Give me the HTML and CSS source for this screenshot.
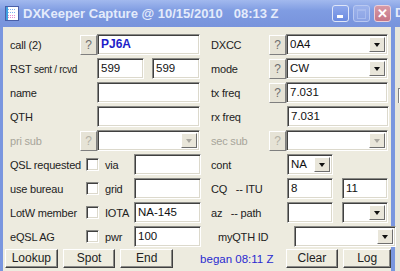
FILE: index.html
```html
<!DOCTYPE html>
<html lang="en">
<head>
  <meta charset="UTF-8" />
  <title>DXKeeper Capture</title>
  <link rel="stylesheet" href="styles.css">
</head>
<body>
  <div class="screen">
    <div class="window">
      <div class="titlebar">
        <svg class="app-icon" width="14" height="15" viewBox="0 0 14 15">
          <rect x="0.5" y="0.5" width="13" height="14" fill="#fff" stroke="#4a5fa8"/>
          <g fill="#7fb0f0">
            <rect x="3" y="3" width="1" height="1"/><rect x="5" y="3" width="1" height="1"/><rect x="7" y="3" width="1" height="1"/><rect x="9" y="3" width="1" height="1"/>
            <rect x="3" y="6" width="1" height="1"/><rect x="5" y="6" width="1" height="1"/><rect x="7" y="6" width="1" height="1"/><rect x="9" y="6" width="1" height="1"/>
          </g>
          <g fill="#e88ad0">
            <rect x="3" y="9" width="1" height="1"/><rect x="5" y="9" width="1" height="1"/><rect x="7" y="9" width="1" height="1"/><rect x="9" y="9" width="1" height="1"/>
            <rect x="3" y="11" width="1" height="1"/><rect x="5" y="11" width="1" height="1"/><rect x="7" y="11" width="1" height="1"/><rect x="9" y="11" width="1" height="1"/>
          </g>
          <rect x="1" y="1" width="2" height="13" fill="#3fa0e0"/>
        </svg>
        <span class="title">DXKeeper Capture @ 10/15/2010&nbsp;&nbsp;&nbsp;08:13 Z</span>
        <div class="tbtns">
          <span class="tbtn tmin"><i></i></span>
          <span class="tbtn tmax"><i></i></span>
          <span class="tbtn tclose">&#x2715;</span>
        </div>
      </div>

      <div class="form">
        <div class="row">
          <div class="lcell">
            <span class="lbl">call (2)</span>
            <span class="qbtn">?</span>
            <span class="field wide call">PJ6A</span>
          </div>
          <div class="rcell">
            <span class="lbl r">DXCC</span>
            <span class="qbtn">?</span>
            <span class="field combo rwide">0A4<b class="drop"></b></span>
          </div>
        </div>

        <div class="row">
          <div class="lcell">
            <span class="lbl wide-lbl">RST <small>sent / rcvd</small></span>
            <span class="field rst">599</span>
            <span class="field rst second">599</span>
          </div>
          <div class="rcell">
            <span class="lbl r">mode</span>
            <span class="qbtn">?</span>
            <span class="field combo rwide">CW<b class="drop"></b></span>
          </div>
        </div>

        <div class="row">
          <div class="lcell">
            <span class="lbl wide-lbl">name</span>
            <span class="field wide"></span>
          </div>
          <div class="rcell">
            <span class="lbl r">tx freq</span>
            <span class="qbtn">?</span>
            <span class="field rwide">7.031</span>
          </div>
        </div>

        <div class="row">
          <div class="lcell">
            <span class="lbl wide-lbl">QTH</span>
            <span class="field wide"></span>
          </div>
          <div class="rcell">
            <span class="lbl r wide-lbl-r">rx freq</span>
            <span class="field rwide">7.031</span>
          </div>
        </div>

        <div class="row">
          <div class="lcell">
            <span class="lbl off">pri sub</span>
            <span class="qbtn off">?</span>
            <span class="field combo wide"><b class="drop off"></b></span>
          </div>
          <div class="rcell">
            <span class="lbl r off">sec sub</span>
            <span class="qbtn off">?</span>
            <span class="field combo rwide"><b class="drop off"></b></span>
          </div>
        </div>

        <div class="row">
          <div class="lcell">
            <span class="lbl chk-lbl">QSL requested</span>
            <span class="check"></span>
            <span class="sublbl">via</span>
            <span class="field small"></span>
          </div>
          <div class="rcell">
            <span class="lbl r wide-lbl-r">cont</span>
            <span class="field combo cont">NA<b class="drop"></b></span>
          </div>
        </div>

        <div class="row">
          <div class="lcell">
            <span class="lbl chk-lbl">use bureau</span>
            <span class="check"></span>
            <span class="sublbl">grid</span>
            <span class="field small"></span>
          </div>
          <div class="rcell">
            <span class="lbl r wide-lbl-r">CQ &nbsp;&nbsp;-- ITU</span>
            <span class="field half">8</span>
            <span class="field half second">11</span>
          </div>
        </div>

        <div class="row">
          <div class="lcell">
            <span class="lbl chk-lbl">LotW member</span>
            <span class="check"></span>
            <span class="sublbl">IOTA</span>
            <span class="field small">NA-145</span>
          </div>
          <div class="rcell">
            <span class="lbl r wide-lbl-r">az &nbsp;&nbsp;-- path</span>
            <span class="field half"></span>
            <span class="field combo half second"><b class="drop"></b></span>
          </div>
        </div>

        <div class="row">
          <div class="lcell">
            <span class="lbl chk-lbl">eQSL AG</span>
            <span class="check"></span>
            <span class="sublbl">pwr</span>
            <span class="field small">100</span>
          </div>
          <div class="rcell">
            <span class="lbl r wide-lbl-r indent">myQTH ID</span>
            <span class="field combo rwide"><b class="drop"></b></span>
          </div>
        </div>

        <div class="row buttons">
          <span class="btn">Lookup</span>
          <span class="btn">Spot</span>
          <span class="btn">End</span>
          <span class="began">began 08:11 Z</span>
          <span class="btn">Clear</span>
          <span class="btn log">Log</span>
        </div>
      </div>
    </div>

    <div class="behind">
      <div class="behind-title">D</div>
      <div class="behind-body">
        <span class="behind-box"></span>
      </div>
    </div>
  </div>
</body>
</html>
```

FILE: styles.css
```css
body {
  margin: 0;
  width: 400px;
  height: 271px;
  overflow: hidden;
  font-family: "Liberation Sans", Arial, sans-serif;
  font-size: 11px;
  color: #222;
  background-color: #7a96df;
}

.screen {
  display: flex;
  height: 271px;
}

.window {
  width: 395px;
  flex: none;
  display: flex;
  flex-direction: column;
  background-color: #7a96df;
}

.titlebar {
  height: 27px;
  display: flex;
  align-items: center;
  padding-left: 5px;
  background: linear-gradient(#a2b9ee, #7f9ce2 40%, #7893dc);
  color: #e4ebfb;
}

.app-icon {
  flex: none;
  margin-top: -1px;
}

.title {
  margin-left: 4px;
  font-size: 13px;
  font-weight: bold;
  white-space: nowrap;
}

.tbtns {
  margin-left: auto;
  margin-right: 4px;
  display: flex;
  gap: 4px;
}

.tbtn {
  width: 17px;
  height: 17px;
  box-sizing: border-box;
  border: 1px solid #dfe6f8;
  border-radius: 3px;
  background: linear-gradient(#8ea8ec, #6a8ae0);
  position: relative;
}

.tmin i {
  position: absolute;
  left: 4px;
  bottom: 3px;
  width: 6px;
  height: 3px;
  background-color: #fff;
}

.tmax {
  background: linear-gradient(#9db3ec, #8aa2e4);
  border-color: #b9c8f1;
}

.tmax i {
  position: absolute;
  left: 3px;
  top: 3px;
  width: 7px;
  height: 7px;
  border: 1px solid #a8bbee;
  border-top-width: 2px;
}

.tclose {
  background: linear-gradient(#d79aa6, #c57586);
  border-color: #ecd0d8;
  color: #fff;
  font-size: 13px;
  font-weight: bold;
  line-height: 15px;
  text-align: center;
}

.form {
  flex: 1;
  margin: 0 4px 0 3px;
  padding-top: 7px;
  background-color: #edebdf;
  display: flex;
  flex-direction: column;
  gap: 3px;
}

.row {
  display: flex;
  height: 21px;
}

.lcell,
.rcell {
  display: flex;
  align-items: center;
  height: 21px;
}

.lcell {
  width: 200px;
  padding-left: 7px;
  box-sizing: border-box;
}

.rcell {
  padding-left: 8px;
}

.lbl {
  width: 70px;
  flex: none;
  white-space: nowrap;
  letter-spacing: -0.2px;
}

.lbl small {
  font-size: 10px;
  letter-spacing: -0.3px;
}

.lbl.wide-lbl {
  width: 87px;
}

.lbl.r {
  width: 58px;
}

.lbl.r.wide-lbl-r {
  width: 76px;
}

.lbl.indent {
  padding-left: 9px;
  width: 67px;
}

.lbl.chk-lbl {
  width: 76px;
}

.off {
  color: #a7a59a;
}

.qbtn {
  width: 17px;
  height: 20px;
  box-sizing: border-box;
  border: 1px solid;
  border-color: #fff #7f7f7f #7f7f7f #fff;
  background-color: #e6e3d6;
  color: #6e6e6e;
  font-size: 12px;
  line-height: 18px;
  text-align: center;
}

.qbtn.off {
  color: #b3b1a6;
}

.field {
  position: relative;
  height: 21px;
  box-sizing: border-box;
  border: 1px solid;
  border-color: #8a8a86 #fff #fff #8a8a86;
  box-shadow: inset 1px 1px 0 #404040, inset -1px -1px 0 #dcd9cc;
  background-color: #fff;
  padding: 0 0 0 3px;
  line-height: 19px;
  font-size: 11.5px;
  color: #111;
  white-space: nowrap;
}

.field.wide {
  width: 103px;
}

.field.call {
  color: #1d1dc8;
  font-weight: bold;
  font-size: 12px;
}

.field.rst {
  width: 47px;
}

.field.rst.second {
  margin-left: 8px;
  width: 48px;
}

.field.rwide {
  width: 102px;
}

.field.small {
  width: 67px;
}

.field.cont {
  width: 46px;
}

.field.half {
  width: 46px;
}

.field.half.second {
  margin-left: 9px;
}

.drop {
  position: absolute;
  right: 2px;
  top: 2px;
  width: 16px;
  height: 15px;
  box-sizing: border-box;
  border: 1px solid;
  border-color: #fff #6e6e6e #6e6e6e #fff;
  background-color: #e9e6da;
}

.drop::after {
  content: "";
  position: absolute;
  left: 4px;
  top: 5px;
  border-left: 3px solid transparent;
  border-right: 3px solid transparent;
  border-top: 4px solid #111;
}

.drop.off::after {
  border-top-color: #a9a7a0;
}

.check {
  width: 13px;
  height: 13px;
  box-sizing: border-box;
  border: 1px solid;
  border-color: #8a8a86 #fff #fff #8a8a86;
  box-shadow: inset 1px 1px 0 #404040, inset -1px -1px 0 #dcd9cc;
  background-color: #fff;
}

.sublbl {
  width: 29px;
  margin-left: 6px;
  letter-spacing: -0.2px;
}

.row.buttons {
  height: 19px;
  align-items: center;
  padding-left: 2px;
  margin-top: -1px;
}

.btn {
  width: 53px;
  height: 19px;
  box-sizing: border-box;
  border: 1px solid;
  border-color: #fff #404040 #404040 #fff;
  box-shadow: inset -1px -1px 0 #8a8a86;
  background-color: #eeecdf;
  font-size: 12px;
  line-height: 17px;
  text-align: center;
  margin-right: 5px;
}

.began {
  width: 86px;
  margin-left: 22px;
  color: #2a2ad0;
  font-size: 11.5px;
}

.btn.log {
  width: 48px;
  margin-right: 0;
}

.behind {
  flex: 1;
  display: flex;
  flex-direction: column;
  background-color: #e8e6db;
}

.behind-title {
  height: 27px;
  background: linear-gradient(#a2b9ee, #7f9ce2 40%, #7893dc);
  color: #e4ebfb;
  font-weight: bold;
  font-size: 13px;
  line-height: 25px;
  overflow: hidden;
}

.behind-body {
  flex: 1;
  padding-top: 61px;
  padding-left: 3px;
}

.behind-box {
  display: block;
  height: 14px;
  border-top: 1px solid #808080;
  border-left: 1px solid #808080;
  background-color: #fff;
}
```
